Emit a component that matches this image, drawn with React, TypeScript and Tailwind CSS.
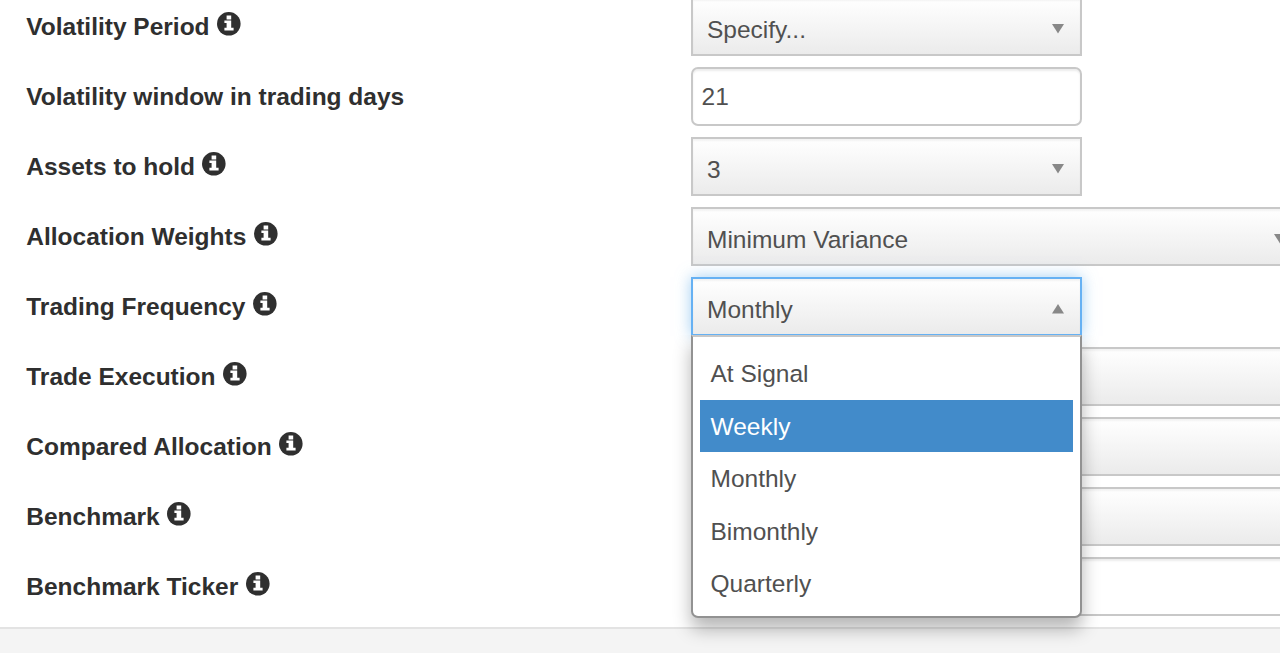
import { clsx } from "clsx";

type Field = {
  label: string;
  info?: boolean;
  type: "select" | "input";
  value?: string;
  width?: string;
  options?: string[];
};

const fields: Field[] = [
  { label: "Volatility Period", info: true, type: "select", value: "Specify..." },
  { label: "Volatility window in trading days", type: "input", value: "21" },
  { label: "Assets to hold", info: true, type: "select", value: "3" },
  { label: "Allocation Weights", info: true, type: "select", value: "Minimum Variance", width: "w-[613px]" },
  {
    label: "Trading Frequency",
    info: true,
    type: "select",
    value: "Monthly",
    options: ["At Signal", "Weekly", "Monthly", "Bimonthly", "Quarterly"],
  },
  { label: "Trade Execution", info: true, type: "select", width: "w-[700px]" },
  { label: "Compared Allocation", info: true, type: "select", width: "w-[700px]" },
  { label: "Benchmark", info: true, type: "select", width: "w-[700px]" },
  { label: "Benchmark Ticker", info: true, type: "input", width: "w-[700px]" },
];

const InfoIcon = () => (
  <svg viewBox="0 0 24 24" className="-mt-[6px] ml-[7.25px] size-6 shrink-0">
    <circle cx="11.8" cy="11.8" r="11.8" fill="#2f2f2f" />
    <path d="M9.6 3.5h4.6v4.1H9.6zM7.4 8.6h6.8v7.2h2.4v2.6H7.4v-2.6h2.2v-4.7H7.4z" fill="#fff" />
  </svg>
);

const Arrow = ({ up }: { up?: boolean }) => (
  <svg viewBox="0 0 12 10" className="mt-[4px] h-[10px] w-3 shrink-0">
    <path d={up ? "M6 0l6 9.5H0z" : "M0 0h12L6 9.5z"} fill="#888" />
  </svg>
);

const Menu = ({ options, active }: { options: string[]; active: string }) => (
  <div className="absolute -left-[2px] top-[56px] z-10 w-[391px] rounded-b-[7px] border-2 border-[#929292] border-t-[#c8c8c8] bg-white px-[7px] pb-[6px] pt-[10.25px] shadow-[0_11px_18px_rgba(0,0,0,0.29)] [clip-path:inset(0_-40px_-50px_-40px)]">
    {options.map((option) => (
      <div
        key={option}
        className={clsx(
          "flex h-[52.5px] items-center pl-[10.5px]",
          option === active && "bg-[#428bca] text-white"
        )}
      >
        {option}
      </div>
    ))}
  </div>
);

const Control = ({ field }: { field: Field }) => {
  const width = field.width ?? "w-[391px]";
  if (field.type === "input") {
    return (
      <div
        className={clsx(
          "flex h-[59px] shrink-0 items-center rounded-[7px] border-2 border-[#c8c8c8] bg-white pl-[8.5px] shadow-[inset_0_2px_2px_rgba(0,0,0,0.075)]",
          width
        )}
      >
        {field.value}
      </div>
    );
  }
  const open = Boolean(field.options);
  return (
    <div
      className={clsx(
        "relative flex h-[59px] shrink-0 items-center justify-between border-2 bg-linear-to-b from-white to-[#ebebeb] pl-[14px] pr-[16px]",
        open
          ? "border-[#66b1f3] shadow-[inset_0_2px_2px_rgba(0,0,0,0.05),0_0_14px_rgba(102,175,233,0.6)]"
          : "border-[#c8c8c8] shadow-[inset_0_2px_2px_rgba(0,0,0,0.05)]",
        width
      )}
    >
      <span className="pt-[5px]">{field.value}</span>
      <Arrow up={open} />
      {field.options && <Menu options={field.options} active="Weekly" />}
    </div>
  );
};

export default function App() {
  return (
    <div className="h-[653px] w-full overflow-hidden bg-white font-['Liberation_Sans',Arial,sans-serif] text-[24.5px] leading-[35px] text-[#505050]">
      <form className="-mt-[3px] flex flex-col gap-[11px] pb-[11px]">
        {fields.map((field) => (
          <div key={field.label} className="flex h-[59px]">
            <div className="flex w-[691px] shrink-0 items-center pl-[26.25px] font-bold text-[#2f2f2f]">
              <span>{field.label}</span>
              {field.info && <InfoIcon />}
            </div>
            <Control field={field} />
          </div>
        ))}
      </form>
      <div className="h-[40px] border-t-2 border-[#e3e3e3] bg-[#f4f4f4]" />
    </div>
  );
}
